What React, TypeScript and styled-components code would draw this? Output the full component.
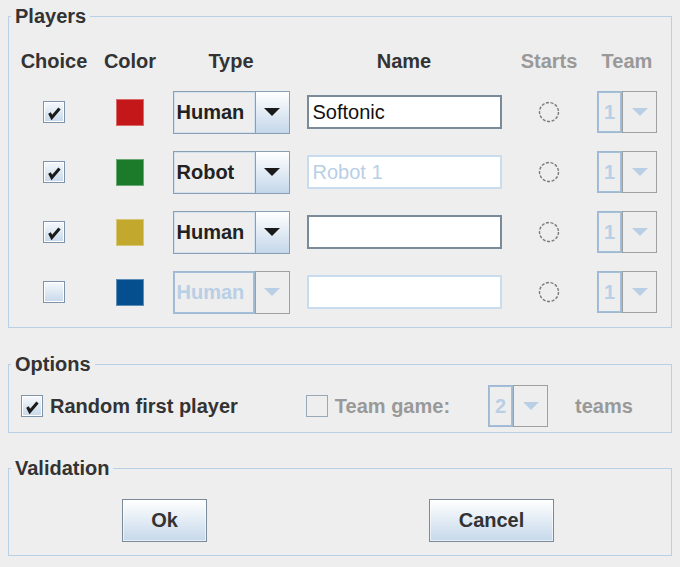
import React from "react";
import styled, { createGlobalStyle, css } from "styled-components";

const Global = createGlobalStyle`
  html, body { margin: 0; padding: 0; background: #eeeeee; }
  body { font-family: "Liberation Sans", Arial, sans-serif; }
`;

const Page = styled.div`
  width: 680px;
  height: 567px;
  box-sizing: border-box;
  padding: 5px 8px 0 8px;
  background: #eeeeee;
  font-family: "Liberation Sans", Arial, sans-serif;
  color: #333333;
`;

const Group = styled.fieldset<{ $mt?: number; $pt: number; $pb: number; $pl?: number }>`
  margin: ${(p) => p.$mt ?? 0}px 0 0 0;
  padding: ${(p) => p.$pt}px 0 ${(p) => p.$pb}px ${(p) => p.$pl ?? 0}px;
  border: 1px solid #b8cfe5;
  min-width: 0;
`;

const Title = styled.legend`
  margin-left: 2px;
  padding: 0 4px;
  font-size: 20px;
  line-height: 22px;
  font-weight: bold;
  color: #333333;
`;

const PlayerGrid = styled.div`
  display: grid;
  grid-template-columns: 90px 62px 140px 206px 84px 72px;
  grid-template-rows: 26px repeat(4, 44px);
  row-gap: 16px;
  align-items: center;
  justify-items: center;
`;

const Header = styled.div<{ $disabled?: boolean }>`
  font-size: 20px;
  font-weight: bold;
  line-height: 26px;
  color: ${(p) => (p.$disabled ? "#999999" : "#333333")};
`;

const Box = styled.span<{ $disabled?: boolean }>`
  display: inline-flex;
  align-items: center;
  justify-content: center;
  box-sizing: border-box;
  width: 22px;
  height: 22px;
  flex: none;
  border: 1px solid ${(p) => (p.$disabled ? "#98a8b8" : "#7f93a8")};
  ${(p) =>
    p.$disabled
      ? css`
          background: #eeeeee;
        `
      : css`
          background: linear-gradient(#f6f9fc, #c6d8ea);
          box-shadow: inset 0 0 0 1px #ffffff;
        `}
`;

const Swatch = styled.span<{ $color: string }>`
  display: block;
  width: 28px;
  height: 27px;
  box-sizing: border-box;
  background: ${(p) => p.$color};
  border: 1px solid rgba(255, 255, 255, 0.35);
`;

const Combo = styled.div<{ $w: number; $disabled?: boolean }>`
  display: flex;
  box-sizing: border-box;
  width: ${(p) => p.$w}px;
  height: 43px;
  border: 1px solid ${(p) => (p.$disabled ? "#a0a0a0" : "#8a9fb4")};
  background: #eeeeee;
`;

const ComboText = styled.div<{ $disabled?: boolean; $center?: boolean }>`
  flex: 1;
  display: flex;
  align-items: center;
  justify-content: ${(p) => (p.$center ? "center" : "flex-start")};
  padding-left: ${(p) => (p.$center ? 0 : 3)}px;
  font-size: 20px;
  font-weight: bold;
  color: ${(p) => (p.$disabled ? "#b8cfe5" : "#222222")};
  box-shadow: inset 0 0 0 1px ${(p) => (p.$disabled ? "#a3bfd9" : "#d4e1ee")};
  ${(p) => p.$disabled && css`border: 1px solid #9fb9d2; margin: -1px 0 -1px -1px;`}
`;

const ComboArrow = styled.div<{ $w: number; $disabled?: boolean }>`
  width: ${(p) => p.$w}px;
  flex: none;
  display: flex;
  align-items: center;
  justify-content: center;
  border-left: 1px solid ${(p) => (p.$disabled ? "#a0a0a0" : "#8a9fb4")};
  background: ${(p) =>
    p.$disabled ? "#eeeeee" : "linear-gradient(#ffffff, #c4d7ea)"};
`;

const Field = styled.div<{ $disabled?: boolean }>`
  box-sizing: border-box;
  width: 195px;
  height: 34px;
  display: flex;
  align-items: center;
  padding-left: 4px;
  background: #ffffff;
  font-size: 20px;
  color: ${(p) => (p.$disabled ? "#b8cfe5" : "#111111")};
  ${(p) =>
    p.$disabled
      ? css`
          border: 2px solid #c7dcef;
        `
      : css`
          border: 2px solid #7a8a99;
          box-shadow: inset -1px -1px 0 #ffffff;
        `}
`;

const OptionsRow = styled.div`
  display: flex;
  align-items: center;
  height: 42px;
  padding-left: 12px;
`;

const CheckLabel = styled.label<{ $disabled?: boolean; $ml?: number }>`
  display: inline-flex;
  align-items: center;
  gap: 7px;
  margin-left: ${(p) => p.$ml ?? 0}px;
  font-size: 20px;
  font-weight: bold;
  color: ${(p) => (p.$disabled ? "#999999" : "#333333")};
`;

const Plain = styled.span<{ $ml: number }>`
  margin-left: ${(p) => p.$ml}px;
  font-size: 20px;
  font-weight: bold;
  color: #999999;
`;

const SmallCombo = styled(Combo)`
  height: 42px;
`;

const ComboSlot = styled.div<{ $ml: number }>`
  margin-left: ${(p) => p.$ml}px;
`;

const ButtonRow = styled.div`
  display: flex;
  align-items: center;
  padding-left: 113px;
  gap: 222px;
`;

const Button = styled.button<{ $w: number }>`
  box-sizing: border-box;
  width: ${(p) => p.$w}px;
  height: 43px;
  border: 1px solid #7a8a99;
  background: linear-gradient(#ffffff, #c5d8ea);
  box-shadow: inset 0 0 0 1px rgba(255, 255, 255, 0.6);
  font-family: "Liberation Sans", Arial, sans-serif;
  font-size: 20px;
  font-weight: bold;
  color: #333333;
  padding: 0;
  border-radius: 0;
`;

const Check = () => (
  <svg width="20" height="20" viewBox="0 0 20 20">
    <path
      d="M5.5 11 L7.8 15.5 L15.5 6.5"
      fill="none"
      stroke="#1a1a1a"
      strokeWidth="3"
      strokeLinejoin="miter"
    />
  </svg>
);

const CheckBox = ({ checked, disabled }: { checked?: boolean; disabled?: boolean }) => (
  <Box $disabled={disabled}>{checked && <Check />}</Box>
);

const Arrow = ({ disabled }: { disabled?: boolean }) => (
  <svg width="16" height="9" viewBox="0 0 16 9">
    <path d="M0 0 L16 0 L8 8 Z" fill={disabled ? "#b8cfe5" : "#1a1a1a"} />
  </svg>
);

const Radio = () => (
  <svg width="22" height="22" viewBox="0 0 22 22">
    <circle
      cx="11"
      cy="11"
      r="9.5"
      fill="none"
      stroke="#7a7a7a"
      strokeWidth="1.4"
      strokeDasharray="3 1.6"
    />
  </svg>
);

const TeamCombo = ({ value }: { value: string }) => (
  <SmallCombo $w={60} $disabled>
    <ComboText $disabled $center>{value}</ComboText>
    <ComboArrow $w={33} $disabled>
      <Arrow disabled />
    </ComboArrow>
  </SmallCombo>
);

type Player = {
  checked: boolean;
  color: string;
  type: string;
  typeDisabled?: boolean;
  name: string;
  nameDisabled?: boolean;
};

const players: Player[] = [
  { checked: true, color: "#c4171a", type: "Human", name: "Softonic" },
  { checked: true, color: "#1c7a2b", type: "Robot", name: "Robot 1", nameDisabled: true },
  { checked: true, color: "#c3a82e", type: "Human", name: "" },
  { checked: false, color: "#054f8f", type: "Human", typeDisabled: true, name: "", nameDisabled: true },
];

export default function App() {
  return (
    <Page>
      <Global />
      <Group $pt={21} $pb={13}>
        <Title>Players</Title>
        <PlayerGrid>
          <Header>Choice</Header>
          <Header>Color</Header>
          <Header>Type</Header>
          <Header>Name</Header>
          <Header $disabled>Starts</Header>
          <Header $disabled>Team</Header>
          {players.map((p, i) => (
            <React.Fragment key={i}>
              <CheckBox checked={p.checked} />
              <Swatch $color={p.color} />
              <Combo $w={117} $disabled={p.typeDisabled}>
                <ComboText $disabled={p.typeDisabled}>{p.type}</ComboText>
                <ComboArrow $w={33} $disabled={p.typeDisabled}>
                  <Arrow disabled={p.typeDisabled} />
                </ComboArrow>
              </Combo>
              <Field $disabled={p.nameDisabled}>{p.name}</Field>
              <Radio />
              <TeamCombo value="1" />
            </React.Fragment>
          ))}
        </PlayerGrid>
      </Group>

      <Group $mt={25} $pt={10} $pb={5}>
        <Title>Options</Title>
        <OptionsRow>
          <CheckLabel>
            <CheckBox checked />
            Random first player
          </CheckLabel>
          <CheckLabel $disabled $ml={68}>
            <CheckBox disabled />
            Team game:
          </CheckLabel>
          <ComboSlot $ml={38}>
            <TeamCombo value="2" />
          </ComboSlot>
          <Plain $ml={27}>teams</Plain>
        </OptionsRow>
      </Group>

      <Group $mt={24} $pt={20} $pb={13}>
        <Title>Validation</Title>
        <ButtonRow>
          <Button $w={85}>Ok</Button>
          <Button $w={125}>Cancel</Button>
        </ButtonRow>
      </Group>
    </Page>
  );
}
